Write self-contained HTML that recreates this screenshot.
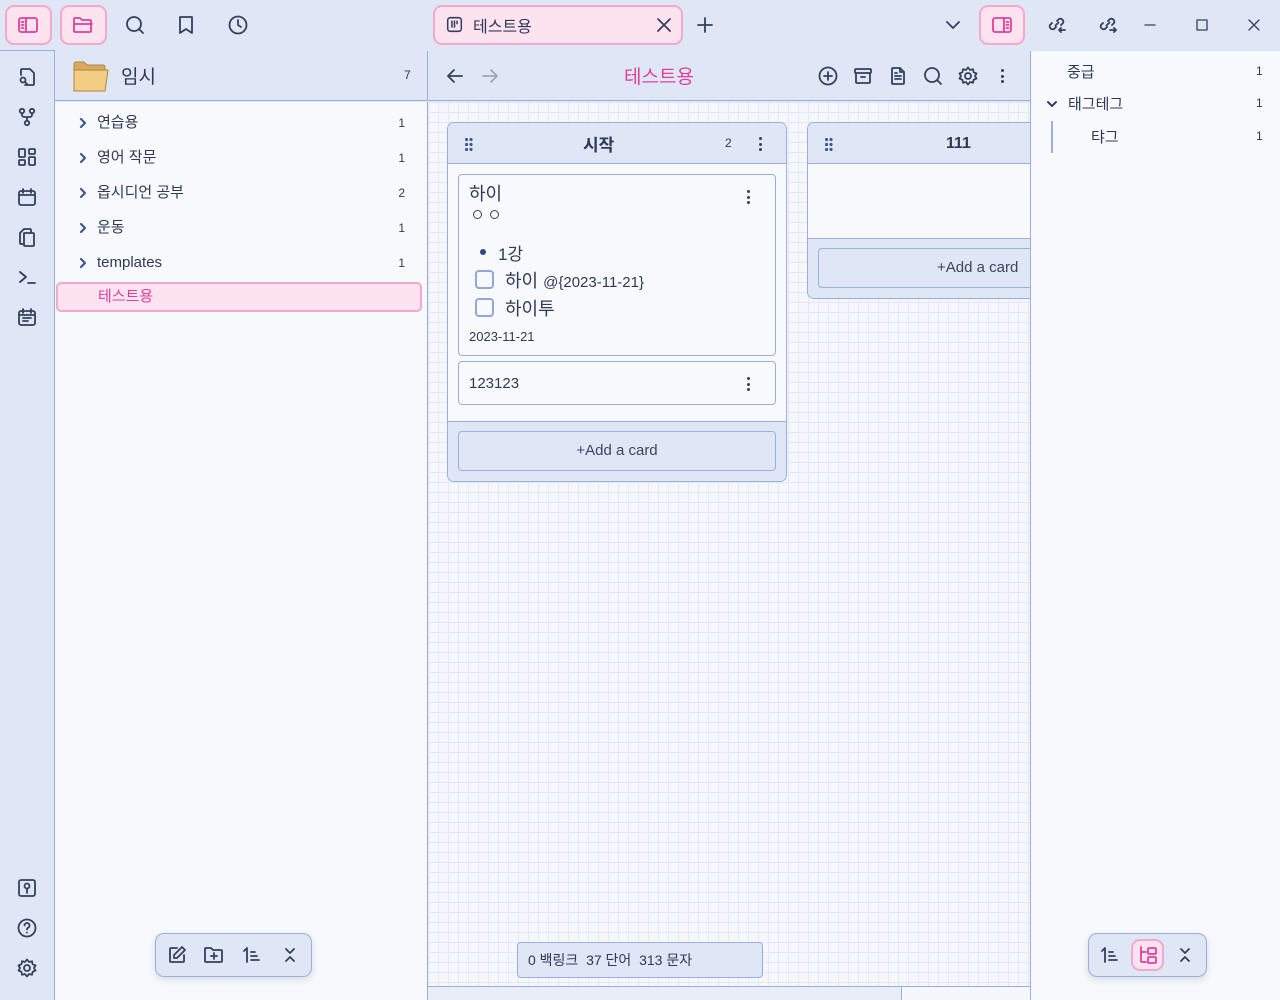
<!DOCTYPE html>
<html><head><meta charset="utf-8">
<style>
*{box-sizing:border-box;margin:0;padding:0}
body{width:1280px;height:1000px;overflow:hidden;background:#dfe6f5;font-family:"Liberation Sans","Noto Sans CJK KR",sans-serif;color:#2e3a55;position:relative}
.abs{position:absolute}
svg{display:block}
.ic{position:absolute;width:20px;height:20px;fill:none;stroke:#34405c;stroke-width:1.8;stroke-linecap:round;stroke-linejoin:round}
.pinkbtn{position:absolute;background:#fde2ef;border:2px solid #f4a9cb;border-radius:9px}
.pk{stroke:#e0409a}
.row{position:absolute;left:55px;width:372px;height:34px;font-size:15px;line-height:34px}
.row .t{position:absolute;left:42px}
.row .n{position:absolute;right:22px;font-size:12px}
.row svg{position:absolute;left:22px;top:11px}
.grid{background-color:#f5f7fd;background-image:linear-gradient(#e2e8f5 1px,transparent 1px),linear-gradient(90deg,#e2e8f5 1px,transparent 1px);background-size:10px 10px}
.lane{position:absolute;background:#f7f9fd;border:1px solid #98afe0;border-radius:7px;overflow:hidden}
.lh{position:absolute;left:0;right:0;top:0;height:41px;background:#dfe6f5;border-bottom:1px solid #98afe0}
.card{position:absolute;background:#f8f9fd;border:1px solid #98afe0;border-radius:4px}
.addb{position:absolute;background:#dfe6f5;border:1px solid #98afe0;border-radius:4px;font-size:15px;text-align:center;line-height:38px;color:#3a4560}
.dots{position:absolute;width:4px}
.dots i{display:block;width:3px;height:3px;border-radius:50%;background:#34405c;margin-bottom:2.5px}
.cb{position:absolute;width:19px;height:19px;border:2px solid #8fa8dc;border-radius:4px}
</style></head><body>

<div class="pinkbtn" style="left:5px;top:5px;width:47px;height:40px"></div>
<svg class="ic pk" style="left:18px;top:15px" viewBox="0 0 20 20"><rect x="1" y="3" width="18" height="14" rx="2"/><line x1="8" y1="3" x2="8" y2="17"/><line x1="3.5" y1="7" x2="5.5" y2="7"/><line x1="3.5" y1="10" x2="5.5" y2="10"/><line x1="3.5" y1="13" x2="5.5" y2="13"/></svg>
<div class="pinkbtn" style="left:60px;top:5px;width:47px;height:40px"></div>
<svg class="ic pk" style="left:73px;top:15px" viewBox="0 0 20 20"><path d="M1 4a1 1 0 0 1 1-1h5l2 2h8a1 1 0 0 1 1 1v10a1 1 0 0 1-1 1H2a1 1 0 0 1-1-1z"/><line x1="1" y1="9" x2="19" y2="9"/></svg>
<svg class="ic" style="left:125px;top:15px" viewBox="0 0 20 20"><circle cx="9" cy="9" r="7"/><line x1="14" y1="14" x2="18" y2="18"/></svg>
<svg class="ic" style="left:176px;top:15px" viewBox="0 0 20 20"><path d="M4 2h12v16l-6-4-6 4z"/></svg>
<svg class="ic" style="left:228px;top:15px" viewBox="0 0 20 20"><circle cx="10" cy="10" r="8.5"/><path d="M10 5v5l3 2"/></svg>

<div class="pinkbtn" style="left:433px;top:5px;width:250px;height:40px"></div>
<svg class="ic" style="left:446px;top:16px;width:17px;height:17px" viewBox="0 0 20 20"><rect x="2" y="2" width="16" height="16" rx="3"/><line x1="7" y1="6" x2="7" y2="13"/><line x1="10" y1="6" x2="10" y2="13"/><line x1="13" y1="6" x2="13" y2="9"/></svg>
<div class="abs" style="left:473px;top:13px;font-size:16px">테스트용</div>
<svg class="ic" style="left:654px;top:15px" viewBox="0 0 20 20"><path d="M4 4l12 12M16 4L4 16"/></svg>
<svg class="ic" style="left:695px;top:15px" viewBox="0 0 20 20"><path d="M10 3v14M3 10h14"/></svg>
<svg class="ic" style="left:943px;top:15px" viewBox="0 0 20 20"><path d="M4 7l6 6 6-6"/></svg>
<div class="pinkbtn" style="left:979px;top:5px;width:46px;height:40px"></div>
<svg class="ic pk" style="left:992px;top:15px" viewBox="0 0 20 20"><rect x="1" y="3" width="18" height="14" rx="2"/><line x1="12" y1="3" x2="12" y2="17"/><line x1="14.5" y1="7" x2="16.5" y2="7"/><line x1="14.5" y1="10" x2="16.5" y2="10"/><line x1="14.5" y1="13" x2="16.5" y2="13"/></svg>
<svg class="ic" style="left:1048px;top:15px" viewBox="0 0 20 20"><path d="M9 6l2-2a3 3 0 0 1 4 4l-2 2M8 12l-2 2a3 3 0 0 1-4-4l2-2M7.5 10.5l3-3M13 17l-2-2 2-2M11 15h6"/></svg>
<svg class="ic" style="left:1099px;top:15px" viewBox="0 0 20 20"><path d="M9 6l2-2a3 3 0 0 1 4 4l-2 2M8 12l-2 2a3 3 0 0 1-4-4l2-2M7.5 10.5l3-3M15 13l2 2-2 2M11 15h6"/></svg>
<svg class="ic" style="left:1140px;top:15px;stroke-width:1.3" viewBox="0 0 20 20"><path d="M5 10h10"/></svg>
<svg class="ic" style="left:1192px;top:15px;stroke-width:1.3" viewBox="0 0 20 20"><rect x="5" y="5" width="10" height="10"/></svg>
<svg class="ic" style="left:1244px;top:15px;stroke-width:1.3" viewBox="0 0 20 20"><path d="M5 5l10 10M15 5L5 15"/></svg>

<div class="abs" style="left:0;top:50px;width:55px;height:950px;background:#dfe6f5;border-top:1px solid #98afe0;border-right:1px solid #98afe0"></div>
<svg class="ic" style="left:17px;top:67px" viewBox="0 0 20 20"><path d="M4 8V3a1 1 0 0 1 1-1h8l4 4v11a1 1 0 0 1-1 1H8"/><circle cx="6" cy="13" r="2.5"/><path d="M8 15l2 2"/></svg>
<svg class="ic" style="left:17px;top:107px" viewBox="0 0 20 20"><circle cx="5" cy="4" r="2.2"/><circle cx="15" cy="4" r="2.2"/><circle cx="10" cy="16" r="2.2"/><path d="M5 6.5v1.5a2 2 0 0 0 2 2h6a2 2 0 0 0 2-2V6.5M10 10v3.5"/></svg>
<svg class="ic" style="left:17px;top:147px" viewBox="0 0 20 20"><rect x="2" y="2" width="6" height="8" rx="1"/><rect x="12" y="2" width="6" height="5" rx="1"/><rect x="2" y="13" width="6" height="5" rx="1"/><rect x="12" y="10" width="6" height="8" rx="1"/></svg>
<svg class="ic" style="left:17px;top:187px" viewBox="0 0 20 20"><rect x="2" y="4" width="16" height="14" rx="2"/><path d="M2 8h16M6 2v4M14 2v4"/></svg>
<svg class="ic" style="left:17px;top:227px" viewBox="0 0 20 20"><path d="M14 6V3a1 1 0 0 0-1-1H7L3 6v10a1 1 0 0 0 1 1h3"/><path d="M7 6h9a1 1 0 0 1 1 1v11a1 1 0 0 1-1 1H8a1 1 0 0 1-1-1z"/></svg>
<svg class="ic" style="left:17px;top:267px" viewBox="0 0 20 20"><path d="M3 5l6 5-6 5M11 16h7"/></svg>
<svg class="ic" style="left:17px;top:307px" viewBox="0 0 20 20"><rect x="2" y="4" width="16" height="14" rx="2"/><path d="M2 8h16M6 2v4M14 2v4M6 11h8M6 14h5"/></svg>
<svg class="ic" style="left:17px;top:878px" viewBox="0 0 20 20"><rect x="2" y="2" width="16" height="16" rx="2"/><circle cx="10" cy="8" r="2.5"/><path d="M10 10.5V15"/></svg>
<svg class="ic" style="left:17px;top:918px" viewBox="0 0 20 20"><circle cx="10" cy="10" r="8.5"/><path d="M7.5 7.5a2.5 2.5 0 1 1 3.5 2.3c-.7.3-1 .9-1 1.7M10 14.5v.1"/></svg>
<svg class="ic" style="left:17px;top:958px" viewBox="0 0 20 20"><circle cx="10" cy="10" r="3"/><path d="M10 1.5l2 2.5 3-.8.6 3 2.9 1.3-1.5 2.5 1.5 2.5-2.9 1.3-.6 3-3-.8-2 2.5-2-2.5-3 .8-.6-3L1.5 12.5 3 10 1.5 7.5l2.9-1.3.6-3 3 .8z"/></svg>

<div class="abs" style="left:55px;top:51px;width:372px;height:50px;background:#dfe6f5;border-bottom:1px solid #98afe0"></div>
<svg class="abs" style="left:73px;top:61px" width="36" height="31" viewBox="0 0 36 31"><path d="M1 3a2 2 0 0 1 2-2h8l3 3h16a2 2 0 0 1 2 2v3H1z" fill="#d9a95c" stroke="#b08440"/><path d="M1 9h34l-3 21H1z" fill="#f4cd85" stroke="#b08440"/></svg>
<div class="abs" style="left:121px;top:62px;font-size:19px">임시</div>
<div class="abs" style="left:404px;top:68px;font-size:12px">7</div>
<div class="abs" style="left:55px;top:102px;width:372px;height:898px;background:#f7f9fd"></div>
<div class="row" style="top:106px"><svg class="ic" style="width:12px;height:12px;stroke-width:2.2;stroke:#3f5890" viewBox="0 0 12 12"><path d="M4 2l4 4-4 4"/></svg><span class="t">연습용</span><span class="n">1</span></div>
<div class="row" style="top:141px"><svg class="ic" style="width:12px;height:12px;stroke-width:2.2;stroke:#3f5890" viewBox="0 0 12 12"><path d="M4 2l4 4-4 4"/></svg><span class="t">영어 작문</span><span class="n">1</span></div>
<div class="row" style="top:176px"><svg class="ic" style="width:12px;height:12px;stroke-width:2.2;stroke:#3f5890" viewBox="0 0 12 12"><path d="M4 2l4 4-4 4"/></svg><span class="t">옵시디언 공부</span><span class="n">2</span></div>
<div class="row" style="top:211px"><svg class="ic" style="width:12px;height:12px;stroke-width:2.2;stroke:#3f5890" viewBox="0 0 12 12"><path d="M4 2l4 4-4 4"/></svg><span class="t">운동</span><span class="n">1</span></div>
<div class="row" style="top:246px"><svg class="ic" style="width:12px;height:12px;stroke-width:2.2;stroke:#3f5890" viewBox="0 0 12 12"><path d="M4 2l4 4-4 4"/></svg><span class="t">templates</span><span class="n">1</span></div>
<div class="abs" style="left:56px;top:282px;width:366px;height:30px;background:#fde2ef;border:2px solid #f4a9cb;border-radius:5px"></div>
<div class="abs" style="left:98px;top:285px;font-size:15px;color:#e0409a">테스트용</div>
<div class="abs" style="left:155px;top:933px;width:157px;height:44px;background:#dfe6f5;border:1px solid #98afe0;border-radius:9px;box-shadow:0 3px 8px rgba(0,0,0,.12)"></div>
<svg class="ic" style="left:167px;top:945px" viewBox="0 0 20 20"><path d="M10 3H4a1 1 0 0 0-1 1v12a1 1 0 0 0 1 1h12a1 1 0 0 0 1-1v-6"/><path d="M15 2l3 3-8 8H7v-3z"/></svg>
<svg class="ic" style="left:204px;top:945px" viewBox="0 0 20 20"><path d="M1 4a1 1 0 0 1 1-1h5l2 2h8a1 1 0 0 1 1 1v10a1 1 0 0 1-1 1H2a1 1 0 0 1-1-1z"/><path d="M10 8v6M7 11h6"/></svg>
<svg class="ic" style="left:242px;top:945px" viewBox="0 0 20 20"><path d="M5 17V3L2 6M9 7h4M9 11h6M9 15h8"/></svg>
<svg class="ic" style="left:280px;top:945px" viewBox="0 0 20 20"><path d="M6 4l4 4 4-4M6 16l4-4 4 4"/></svg>

<div class="abs" style="left:427px;top:51px;width:603px;height:50px;background:#dfe6f5;border-left:1px solid #98afe0;border-bottom:1px solid #98afe0"></div>
<svg class="ic" style="left:445px;top:66px" viewBox="0 0 20 20"><path d="M17 10H3M9 4l-6 6 6 6"/></svg>
<svg class="ic" style="left:480px;top:66px;stroke:#9aa6c0" viewBox="0 0 20 20"><path d="M3 10h14M11 4l6 6-6 6"/></svg>
<div class="abs" style="left:624px;top:62px;font-size:19px;color:#e0409a">테스트용</div>
<svg class="ic" style="left:818px;top:66px" viewBox="0 0 20 20"><circle cx="10" cy="10" r="8.5"/><path d="M10 6v8M6 10h8"/></svg>
<svg class="ic" style="left:853px;top:66px" viewBox="0 0 20 20"><rect x="2" y="3" width="16" height="4" rx="1"/><path d="M3 7v9a1 1 0 0 0 1 1h12a1 1 0 0 0 1-1V7M8 11h4"/></svg>
<svg class="ic" style="left:888px;top:66px" viewBox="0 0 20 20"><path d="M12 2H5a1 1 0 0 0-1 1v14a1 1 0 0 0 1 1h10a1 1 0 0 0 1-1V6z"/><path d="M12 2v4h4M7 10h6M7 13h6M7 7h2"/></svg>
<svg class="ic" style="left:923px;top:66px" viewBox="0 0 20 20"><circle cx="9" cy="9" r="7"/><line x1="14" y1="14" x2="18" y2="18"/></svg>
<svg class="ic" style="left:958px;top:66px" viewBox="0 0 20 20"><circle cx="10" cy="10" r="3"/><path d="M10 1.5l2 2.5 3-.8.6 3 2.9 1.3-1.5 2.5 1.5 2.5-2.9 1.3-.6 3-3-.8-2 2.5-2-2.5-3 .8-.6-3L1.5 12.5 3 10 1.5 7.5l2.9-1.3.6-3 3 .8z"/></svg>
<div class="dots" style="left:1001px;top:69px"><i></i><i></i><i></i></div>

<div class="abs grid" style="left:427px;top:102px;width:603px;height:884px;border-left:1px solid #98afe0"></div>
<div class="abs" style="left:427px;top:986px;width:603px;height:14px;background:#f5f7fd;border-top:1px solid #98afe0;border-left:1px solid #98afe0"></div>
<div class="abs" style="left:428px;top:987px;width:474px;height:13px;background:#e8edf8;border-right:1px solid #98afe0"></div>

<div class="lane" style="left:447px;top:122px;width:340px;height:360px">
  <div class="lh"></div>
  <div class="abs" style="left:17px;top:15px"><svg width="8" height="13" viewBox="0 0 8 13" fill="#3f5890"><circle cx="1.5" cy="1.5" r="1.6"/><circle cx="6" cy="1.5" r="1.6"/><circle cx="1.5" cy="6.5" r="1.6"/><circle cx="6" cy="6.5" r="1.6"/><circle cx="1.5" cy="11.5" r="1.6"/><circle cx="6" cy="11.5" r="1.6"/></svg></div>
  <div class="abs" style="left:135px;top:8px;font-size:17px;font-weight:bold">시작</div>
  <div class="abs" style="left:277px;top:13px;font-size:12px">2</div>
  <div class="dots" style="left:311px;top:14px"><i></i><i></i><i></i></div>
  <div class="abs" style="left:0;right:0;top:298px;bottom:0;background:#dfe6f5;border-top:1px solid #98afe0"></div>
</div>
<div class="card" style="left:458px;top:174px;width:318px;height:182px"></div>
<div class="abs" style="left:469px;top:180px;font-size:18px">하이</div>
<div class="dots" style="left:747px;top:190px"><i></i><i></i><i></i></div>
<div class="abs" style="left:473px;top:210px;width:9px;height:9px;border:1.2px solid #34405c;border-radius:50%"></div>
<div class="abs" style="left:490px;top:210px;width:9px;height:9px;border:1.2px solid #34405c;border-radius:50%"></div>
<div class="abs" style="left:480px;top:249px;width:6px;height:6px;background:#2e4785;border-radius:50%"></div>
<div class="abs" style="left:498px;top:240px;font-size:17px">1강</div>
<div class="cb" style="left:475px;top:270px"></div>
<div class="abs" style="left:505px;top:267px;font-size:18px">하이 <span style="font-size:15px">@{2023-11-21}</span></div>
<div class="cb" style="left:475px;top:298px"></div>
<div class="abs" style="left:505px;top:295px;font-size:18px">하이투</div>
<div class="abs" style="left:469px;top:329px;font-size:13px">2023-11-21</div>
<div class="card" style="left:458px;top:361px;width:318px;height:44px"></div>
<div class="abs" style="left:469px;top:375px;font-size:15px">123123</div>
<div class="dots" style="left:747px;top:377px"><i></i><i></i><i></i></div>
<div class="addb" style="left:458px;top:431px;width:318px;height:40px">+Add a card</div>

<div class="lane" style="left:807px;top:122px;width:240px;height:177px">
  <div class="lh"></div>
  <div class="abs" style="left:17px;top:15px"><svg width="8" height="13" viewBox="0 0 8 13" fill="#3f5890"><circle cx="1.5" cy="1.5" r="1.6"/><circle cx="6" cy="1.5" r="1.6"/><circle cx="1.5" cy="6.5" r="1.6"/><circle cx="6" cy="6.5" r="1.6"/><circle cx="1.5" cy="11.5" r="1.6"/><circle cx="6" cy="11.5" r="1.6"/></svg></div>
  <div class="abs" style="left:138px;top:12px;font-size:16px;font-weight:bold">111</div>
  <div class="abs" style="left:0;right:0;top:115px;bottom:0;background:#dfe6f5;border-top:1px solid #98afe0"></div>
</div>
<div class="addb" style="left:818px;top:248px;width:230px;height:40px;text-align:left;padding-left:118px">+Add a card</div>

<div class="abs" style="left:517px;top:942px;width:246px;height:36px;background:#dfe6f5;border:1px solid #98afe0;border-radius:4px;font-size:14px;line-height:34px;padding-left:10px">0 백링크 &nbsp;37 단어 &nbsp;313 문자</div>

<div class="abs" style="left:1030px;top:51px;width:250px;height:949px;background:#f7f9fd;border-left:1px solid #98afe0"></div>
<div class="abs" style="left:1067px;top:61px;font-size:15px">중급</div>
<div class="abs" style="left:1256px;top:64px;font-size:12px">1</div>
<svg class="ic" style="left:1046px;top:98px;width:12px;height:12px;stroke-width:2" viewBox="0 0 12 12"><path d="M2 4l4 4 4-4"/></svg>
<div class="abs" style="left:1068px;top:93px;font-size:15px">태그테그</div>
<div class="abs" style="left:1256px;top:96px;font-size:12px">1</div>
<div class="abs" style="left:1051px;top:121px;width:2px;height:32px;background:#98afe0"></div>
<div class="abs" style="left:1091px;top:126px;font-size:15px">탸그</div>
<div class="abs" style="left:1256px;top:129px;font-size:12px">1</div>
<div class="abs" style="left:1088px;top:933px;width:119px;height:44px;background:#dfe6f5;border:1px solid #98afe0;border-radius:9px;box-shadow:0 3px 8px rgba(0,0,0,.12)"></div>
<svg class="ic" style="left:1100px;top:945px" viewBox="0 0 20 20"><path d="M5 17V3L2 6M9 7h4M9 11h6M9 15h8"/></svg>
<div class="pinkbtn" style="left:1131px;top:939px;width:33px;height:32px"></div>
<svg class="ic pk" style="left:1138px;top:945px" viewBox="0 0 20 20"><path d="M3 2v14a1 1 0 0 0 1 1h4M3 7h5"/><rect x="10" y="3" width="8" height="6" rx="1"/><rect x="10" y="12" width="8" height="6" rx="1"/></svg>
<svg class="ic" style="left:1175px;top:945px" viewBox="0 0 20 20"><path d="M6 4l4 4 4-4M6 16l4-4 4 4"/></svg>
</body></html>
